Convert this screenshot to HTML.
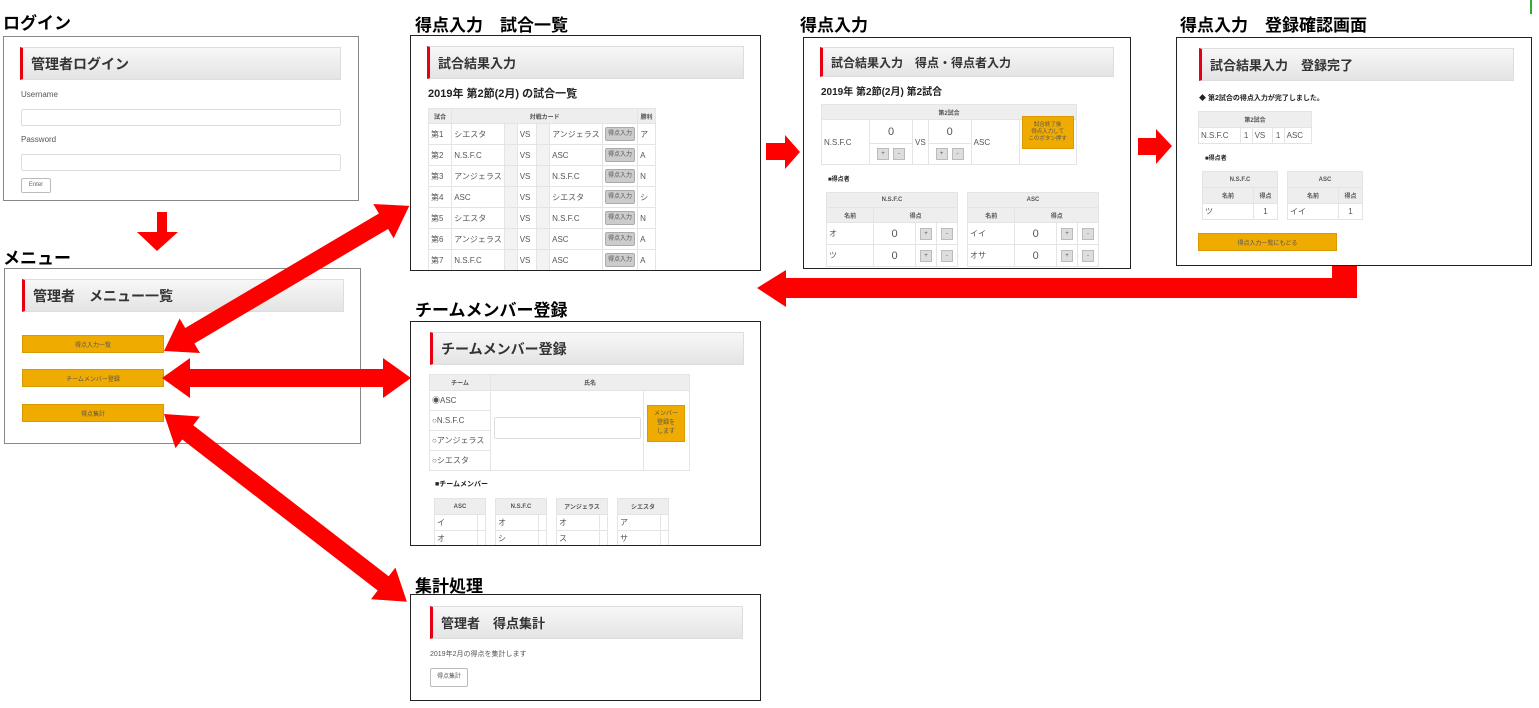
<!DOCTYPE html>
<html><head><meta charset="utf-8">
<style>
*{margin:0;padding:0;box-sizing:border-box}
body{width:1539px;height:708px;background:#fff;position:relative;overflow:hidden;font-family:"Liberation Sans","Noto Sans CJK JP",sans-serif;color:#333}
.a{position:absolute}
.t{position:absolute;font-weight:bold;font-size:17px;color:#000;white-space:nowrap}
.box{position:absolute;background:#fff;border:1px solid #222}
.gb{border-color:#888}
.hd{position:absolute;background:linear-gradient(#f7f7f7,#e4e4e4);border:1px solid #ddd;border-left:3px solid #e60012;font-weight:bold;color:#333;white-space:nowrap;display:flex;align-items:center;padding-left:8px}
.s{font-size:8px;color:#555;white-space:nowrap}
table{position:absolute;border-collapse:collapse;font-size:8px;color:#555}
td{border:1px solid #e4e4e4;white-space:nowrap;padding:0 2px}
.th td,td.th{background:#eee;font-weight:bold;text-align:center;font-size:6px}
.ob{position:absolute;background:#f0ab00;border:1px solid #d89a00;font-size:6px;color:#555;display:flex;align-items:center;justify-content:center;text-align:center}
.gbtn{display:inline-block;background:#ccc;border:1px solid #aaa;border-radius:2px;font-size:6px;color:#555;padding:2px 2px;line-height:8px}
.pm{display:inline-block;width:12px;height:12px;background:#ddd;border:1px solid #bbb;margin:0 2px;font-size:6px;line-height:10px;text-align:center}
.inp{position:absolute;border:1px solid #ddd;border-radius:2px;background:#fff}
.wb{display:inline-block;background:#fff;width:14px;height:20px;vertical-align:middle}
</style></head><body>

<!-- login -->
<div class="t" style="left:3px;top:9px">ログイン</div>
<div class="box gb" style="left:3px;top:36px;width:356px;height:165px"></div>
<div class="hd" style="left:20px;top:47px;width:321px;height:33px;font-size:14px">管理者ログイン</div>
<div class="a s" style="left:21px;top:90px">Username</div>
<div class="inp" style="left:21px;top:109px;width:320px;height:17px"></div>
<div class="a s" style="left:21px;top:135px">Password</div>
<div class="inp" style="left:21px;top:154px;width:320px;height:17px"></div>
<div class="a" style="left:21px;top:178px;width:30px;height:15px;border:1px solid #bbb;border-radius:2px;font-size:6px;text-align:center;line-height:13px;color:#666">Enter</div>

<!-- menu -->
<div class="t" style="left:3px;top:244px">メニュー</div>
<div class="box gb" style="left:4px;top:268px;width:357px;height:176px"></div>
<div class="hd" style="left:22px;top:279px;width:322px;height:33px;font-size:14px">管理者　メニュー一覧</div>
<div class="ob" style="left:22px;top:335px;width:142px;height:18px">得点入力一覧</div>
<div class="ob" style="left:22px;top:369px;width:142px;height:18px">チームメンバー登録</div>
<div class="ob" style="left:22px;top:404px;width:142px;height:18px">得点集計</div>

<!-- match list -->
<div class="t" style="left:415px;top:11px">得点入力　試合一覧</div>
<div class="box" style="left:410px;top:35px;width:351px;height:236px;overflow:hidden">
<div class="hd" style="left:16px;top:10px;width:317px;height:33px;font-size:13px">試合結果入力</div>
<div class="a" style="left:17px;top:49px;font-size:11px;font-weight:bold;color:#222">2019年 第2節(2月) の試合一覧</div>
<table style="left:17px;top:72px;width:228px">
<tr class="th" style="height:15px"><td style="width:24px">試合</td><td colspan="6">対戦カード</td><td style="width:18px">勝利</td></tr>
<tr style="height:21px"><td>第1</td><td style="width:52px">シエスタ</td><td style="width:14px;background:#f3f3f3"></td><td style="width:20px">VS</td><td style="width:14px;background:#f3f3f3"></td><td style="width:53px">アンジェラス</td><td style="width:33px"><span class="gbtn">得点入力</span></td><td>ア</td></tr>
<tr style="height:21px"><td>第2</td><td>N.S.F.C</td><td style="background:#f3f3f3"></td><td>VS</td><td style="background:#f3f3f3"></td><td>ASC</td><td><span class="gbtn">得点入力</span></td><td>A</td></tr>
<tr style="height:21px"><td>第3</td><td>アンジェラス</td><td style="background:#f3f3f3"></td><td>VS</td><td style="background:#f3f3f3"></td><td>N.S.F.C</td><td><span class="gbtn">得点入力</span></td><td>N</td></tr>
<tr style="height:21px"><td>第4</td><td>ASC</td><td style="background:#f3f3f3"></td><td>VS</td><td style="background:#f3f3f3"></td><td>シエスタ</td><td><span class="gbtn">得点入力</span></td><td>シ</td></tr>
<tr style="height:21px"><td>第5</td><td>シエスタ</td><td style="background:#f3f3f3"></td><td>VS</td><td style="background:#f3f3f3"></td><td>N.S.F.C</td><td><span class="gbtn">得点入力</span></td><td>N</td></tr>
<tr style="height:21px"><td>第6</td><td>アンジェラス</td><td style="background:#f3f3f3"></td><td>VS</td><td style="background:#f3f3f3"></td><td>ASC</td><td><span class="gbtn">得点入力</span></td><td>A</td></tr>
<tr style="height:21px"><td>第7</td><td>N.S.F.C</td><td style="background:#f3f3f3"></td><td>VS</td><td style="background:#f3f3f3"></td><td>ASC</td><td><span class="gbtn">得点入力</span></td><td>A</td></tr>
<tr style="height:21px"><td></td><td></td><td style="background:#f3f3f3"></td><td></td><td style="background:#f3f3f3"></td><td></td><td></td><td></td></tr>
</table>
</div>

<!-- score input -->
<div class="t" style="left:800px;top:11px">得点入力</div>
<div class="box" style="left:803px;top:37px;width:328px;height:232px;overflow:hidden">
<div class="hd" style="left:16px;top:9px;width:294px;height:30px;font-size:12px">試合結果入力　得点・得点者入力</div>
<div class="a" style="left:17px;top:45px;font-size:10px;font-weight:bold;color:#222">2019年 第2節(2月) 第2試合</div>
<table style="left:17px;top:66px;width:256px">
<tr class="th" style="height:15px"><td colspan="7">第2試合</td></tr>
<tr style="height:24px"><td rowspan="2" style="width:48px">N.S.F.C</td><td colspan="1" style="width:43px;text-align:center;font-size:11px">0</td><td rowspan="2" style="width:14px">VS</td><td style="width:43px;text-align:center;font-size:11px">0</td><td rowspan="2" style="width:48px">ASC</td><td rowspan="2" style="position:relative"><div class="ob" style="position:absolute;left:2px;top:-4px;width:52px;height:33px;font-size:5.5px;line-height:7px">試合終了後<br>得点入力して<br>このボタン押す</div></td></tr>
<tr style="height:21px"><td style="text-align:center"><span class="pm">+</span><span class="pm">-</span></td><td style="text-align:center"><span class="pm">+</span><span class="pm">-</span></td></tr>
</table>
<div class="a" style="left:24px;top:136px;font-size:6px;font-weight:bold;color:#222">■得点者</div>
<table style="left:22px;top:154px;width:132px">
<tr class="th" style="height:15px"><td colspan="4">N.S.F.C</td></tr>
<tr class="th" style="height:15px"><td style="width:48px">名前</td><td colspan="3">得点</td></tr>
<tr style="height:22px"><td>オ<span class="wb"></span></td><td style="text-align:center;font-size:11px;width:43px">0</td><td style="width:20px"><span class="pm">+</span></td><td><span class="pm">-</span></td></tr>
<tr style="height:22px"><td>ツ<span class="wb"></span></td><td style="text-align:center;font-size:11px">0</td><td><span class="pm">+</span></td><td><span class="pm">-</span></td></tr>
</table>
<table style="left:163px;top:154px;width:132px">
<tr class="th" style="height:15px"><td colspan="4">ASC</td></tr>
<tr class="th" style="height:15px"><td style="width:48px">名前</td><td colspan="3">得点</td></tr>
<tr style="height:22px"><td>イイ<span class="wb"></span></td><td style="text-align:center;font-size:11px;width:43px">0</td><td style="width:20px"><span class="pm">+</span></td><td><span class="pm">-</span></td></tr>
<tr style="height:22px"><td>オサ<span class="wb"></span></td><td style="text-align:center;font-size:11px">0</td><td><span class="pm">+</span></td><td><span class="pm">-</span></td></tr>
</table>
</div>

<!-- confirm -->
<div class="t" style="left:1180px;top:11px">得点入力　登録確認画面</div>
<div class="box" style="left:1176px;top:37px;width:356px;height:229px;overflow:hidden">
<div class="hd" style="left:22px;top:10px;width:315px;height:33px;font-size:13px">試合結果入力　登録完了</div>
<div class="a" style="left:22px;top:55px;font-size:7px;font-weight:bold;color:#222">◆ 第2試合の得点入力が完了しました。</div>
<table style="left:21px;top:73px;width:114px">
<tr class="th" style="height:16px"><td colspan="5">第2試合</td></tr>
<tr style="height:16px"><td>N.S.F.C</td><td style="text-align:center">1</td><td>VS</td><td style="text-align:center">1</td><td>ASC</td></tr>
</table>
<div class="a" style="left:28px;top:115px;font-size:6px;font-weight:bold;color:#222">■得点者</div>
<table style="left:25px;top:133px;width:76px">
<tr class="th" style="height:16px"><td colspan="2">N.S.F.C</td></tr>
<tr class="th" style="height:16px"><td>名前</td><td style="width:24px">得点</td></tr>
<tr style="height:16px"><td>ツ<span class="wb" style="height:12px"></span></td><td style="text-align:center">1</td></tr>
</table>
<table style="left:110px;top:133px;width:76px">
<tr class="th" style="height:16px"><td colspan="2">ASC</td></tr>
<tr class="th" style="height:16px"><td>名前</td><td style="width:24px">得点</td></tr>
<tr style="height:16px"><td>イイ<span class="wb" style="height:12px"></span></td><td style="text-align:center">1</td></tr>
</table>
<div class="ob" style="left:21px;top:195px;width:139px;height:18px">得点入力一覧にもどる</div>
</div>

<!-- member -->
<div class="t" style="left:415px;top:296px">チームメンバー登録</div>
<div class="box" style="left:410px;top:321px;width:351px;height:225px;overflow:hidden">
<div class="hd" style="left:19px;top:10px;width:314px;height:33px;font-size:14px">チームメンバー登録</div>
<table style="left:18px;top:52px;width:261px">
<tr class="th" style="height:16px"><td style="width:61px">チーム</td><td colspan="2">氏名</td></tr>
<tr style="height:20px"><td>◉ASC</td><td rowspan="4" style="width:153px;position:relative"><div class="inp" style="left:3px;top:26px;width:147px;height:22px"></div></td><td rowspan="4" style="position:relative"><div class="ob" style="left:3px;top:14px;width:38px;height:37px;font-size:6px;line-height:9px">メンバー<br>登録を<br>します</div></td></tr>
<tr style="height:20px"><td>○N.S.F.C</td></tr>
<tr style="height:20px"><td>○アンジェラス</td></tr>
<tr style="height:20px"><td>○シエスタ</td></tr>
</table>
<div class="a" style="left:24px;top:157px;font-size:7px;font-weight:bold;color:#222">■チームメンバー</div>
<table style="left:23px;top:176px;width:52px"><tr class="th" style="height:16px"><td colspan="2">ASC</td></tr><tr style="height:16px"><td>イ<span class="wb" style="height:14px"></span></td><td></td></tr><tr style="height:16px"><td>オ<span class="wb" style="height:14px"></span></td><td></td></tr></table>
<table style="left:84px;top:176px;width:52px"><tr class="th" style="height:16px"><td colspan="2">N.S.F.C</td></tr><tr style="height:16px"><td>オ<span class="wb" style="height:14px"></span></td><td></td></tr><tr style="height:16px"><td>シ<span class="wb" style="height:14px"></span></td><td></td></tr></table>
<table style="left:145px;top:176px;width:52px"><tr class="th" style="height:16px"><td colspan="2">アンジェラス</td></tr><tr style="height:16px"><td>オ<span class="wb" style="height:14px"></span></td><td></td></tr><tr style="height:16px"><td>ス<span class="wb" style="height:14px"></span></td><td></td></tr></table>
<table style="left:206px;top:176px;width:52px"><tr class="th" style="height:16px"><td colspan="2">シエスタ</td></tr><tr style="height:16px"><td>ア<span class="wb" style="height:14px"></span></td><td></td></tr><tr style="height:16px"><td>サ<span class="wb" style="height:14px"></span></td><td></td></tr></table>
</div>

<!-- aggregate -->
<div class="t" style="left:415px;top:572px">集計処理</div>
<div class="box" style="left:410px;top:594px;width:351px;height:107px">
<div class="hd" style="left:19px;top:11px;width:313px;height:33px;font-size:13px">管理者　得点集計</div>
<div class="a s" style="left:19px;top:54px;font-size:7px">2019年2月の得点を集計します</div>
<div class="a" style="left:19px;top:73px;width:38px;height:19px;border:1px solid #bbb;border-radius:2px;font-size:6px;text-align:center;line-height:17px;color:#555">得点集計</div>
</div>

<div class="a" style="left:1530px;top:0;width:2px;height:14px;background:#3a3"></div>

<svg class="a" style="left:0;top:0" width="1539" height="708">
<g fill="#ff0000">
<polygon points="157,212 167,212 167,232 178,232 157,251 137,232 157,232"/>
<polygon points="766,143 785,143 785,135 800,152 785,169 785,160 766,160"/>
<polygon points="1138,138 1156,138 1156,129 1172,146 1156,164 1156,155 1138,155"/>
<polygon points="1332,266 1357,266 1357,298 786,298 786,307 757,288 786,270 786,278 1332,278"/>
<g transform="translate(162,378)"><polygon points="0,0 28,-20 28,-9 221,-9 221,-20 249,0 221,20 221,9 28,9 28,20"/></g>
<g transform="translate(164,351) rotate(-30.6)"><polygon points="0,0 30,-20 30,-9 255,-9 255,-20 285,0 255,20 255,9 30,9 30,20"/></g>
<g transform="translate(164,414) rotate(37.7)"><polygon points="0,0 30,-20 30,-9 277,-9 277,-20 307,0 277,20 277,9 30,9 30,20"/></g>
</g>
</svg>
</body></html>
